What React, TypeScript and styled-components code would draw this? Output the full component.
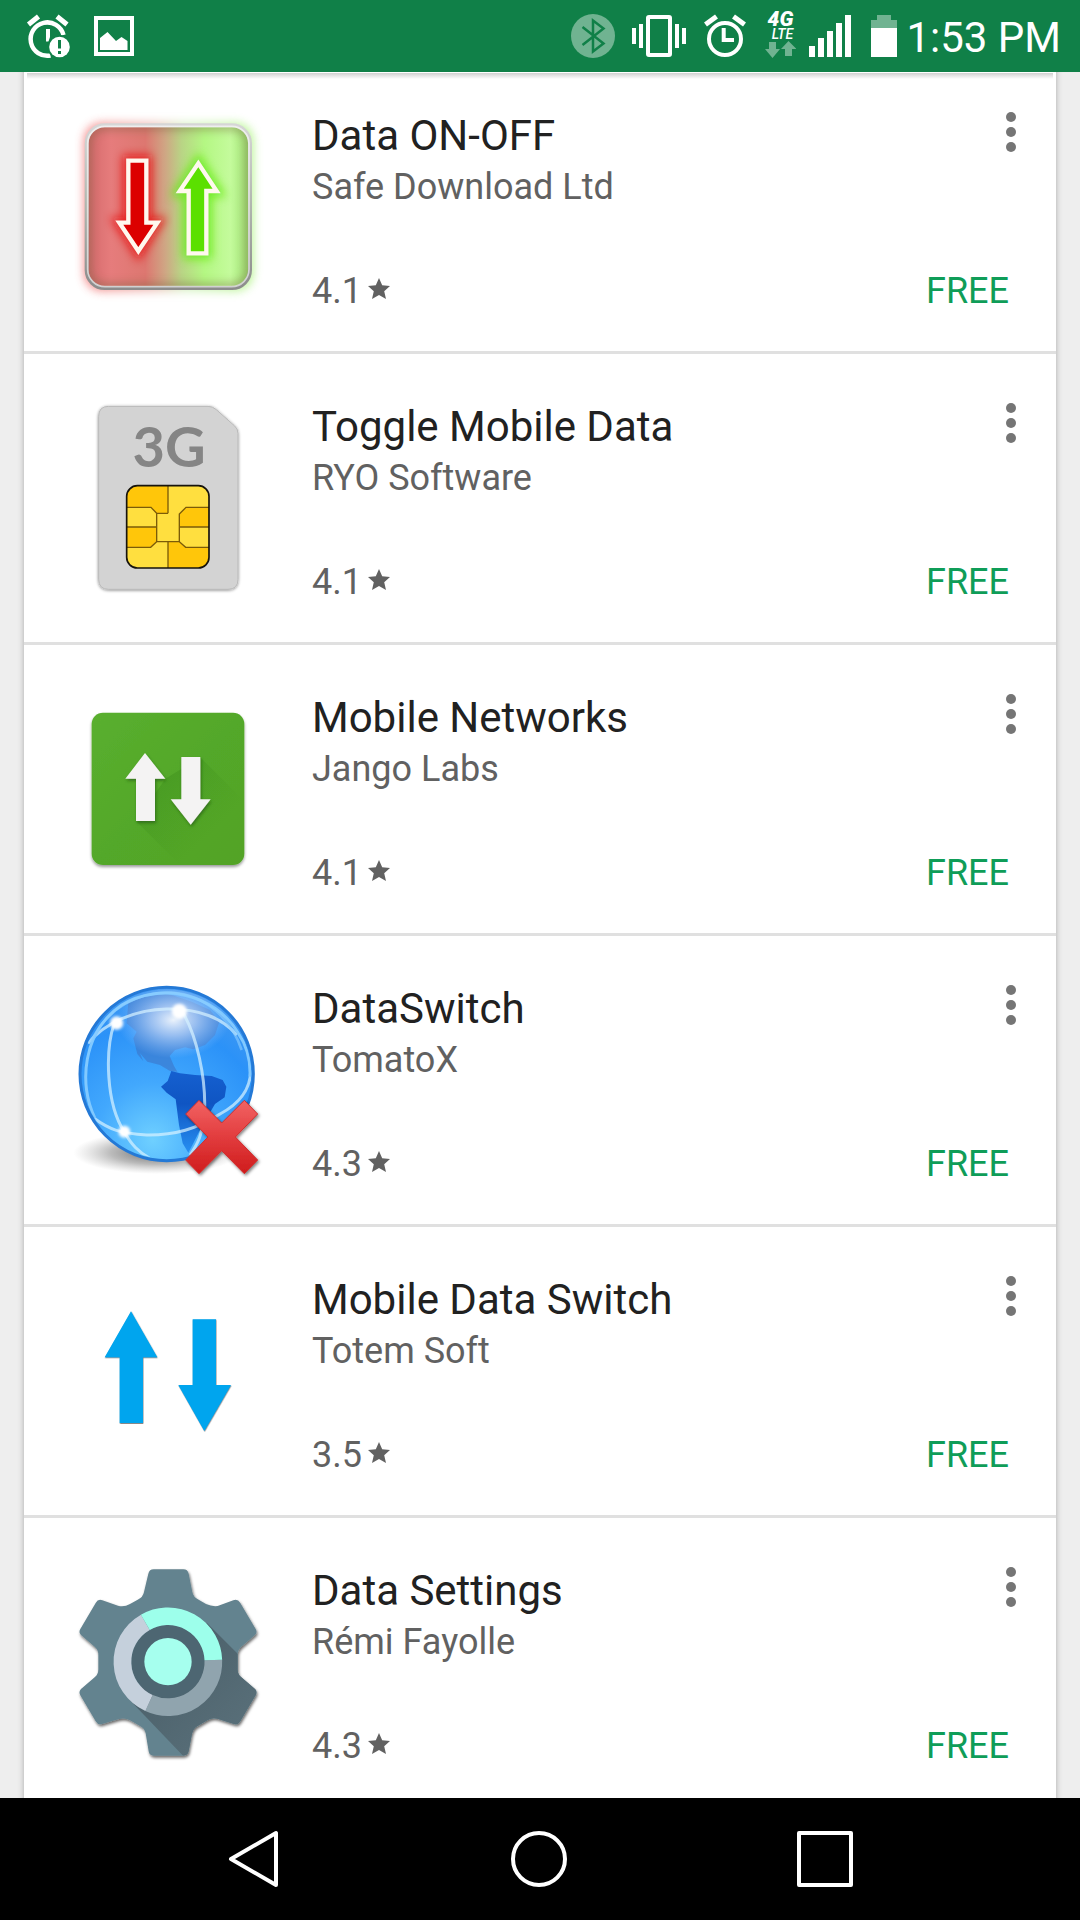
import React from 'react';
import styled, { createGlobalStyle } from 'styled-components';

const GlobalStyle = createGlobalStyle`
  *, *::before, *::after { box-sizing: border-box; }
  body {
    margin: 0;
    background: #eeeeee;
    font-family: Roboto, "Noto Sans", sans-serif;
  }
  h2, p, ul { margin: 0; padding: 0; }
  svg { display: block; flex: none; }
`;

const Screen = styled.div`
  display: flex;
  flex-direction: column;
  height: 100vh;
  overflow: hidden;
`;

const StatusBar = styled.header`
  display: flex;
  flex: none;
  align-items: center;
  justify-content: space-between;
  height: 72px;
  padding: 0 19px 0 24px;
  background: #108048;
  color: #ffffff;
`;

const StatusGroup = styled.div<{ $gap: number }>`
  display: flex;
  align-items: center;
  gap: ${({ $gap }) => $gap}px;
`;

const Clock = styled.time`
  padding-top: 3px;
  font-size: 42px;
  line-height: 50px;
  white-space: nowrap;
`;

const Network = styled.div`
  display: flex;
  flex-direction: column;
  align-items: center;
  width: 40px;
  padding-bottom: 3px;
  font-style: italic;
`;

const NetworkLabel = styled.span`
  font-size: 21px;
  font-weight: 900;
  line-height: 17px;
  text-align: center;
`;

const NetworkBand = styled.small`
  display: block;
  padding-left: 4px;
  font-size: 14px;
  font-weight: 500;
  line-height: 13px;
`;

const Content = styled.main`
  flex: 1;
  min-height: 0;
  padding: 0 24px;
  overflow: hidden;
`;

const AppList = styled.ul`
  margin-top: -9px;
  background: #ffffff;
  box-shadow: 0 0 6px rgba(0, 0, 0, 0.3);
  list-style: none;
`;

const TopShade = styled.div`
  position: relative;
  z-index: 1;
  flex: none;
  height: 7px;
  margin: 0 27px -7px;
  background: linear-gradient(#ffffff 1px, #d0d0d0 1px, #ffffff);
`;

const AppRow = styled.li`
  display: flex;
  align-items: center;
  height: 291px;
  padding: 0 40px 0 36px;
  border-bottom: 3px solid #e0e0e0;
`;

const Details = styled.div`
  display: flex;
  flex: 1;
  flex-direction: column;
  align-self: stretch;
  min-width: 0;
  padding: 48px 0 39px 32px;
`;

const TitleLine = styled.div`
  display: flex;
  align-items: flex-start;
  justify-content: space-between;
`;

const Title = styled.h2`
  color: #212121;
  font-size: 42px;
  font-weight: 400;
  line-height: 50px;
`;

const Developer = styled.p`
  padding-top: 5px;
  color: #616161;
  font-size: 36px;
  line-height: 42px;
`;

const Footer = styled.div`
  display: flex;
  align-items: center;
  justify-content: space-between;
  margin-top: auto;
  padding-right: 7px;
  font-size: 36px;
  line-height: 42px;
`;

const Rating = styled.span`
  display: flex;
  align-items: center;
  gap: 6px;
  color: #616161;
`;

const Price = styled.span`
  color: #0f9d58;
`;

const IconButton = styled.button`
  display: flex;
  justify-content: center;
  padding: 0;
  border: 0;
  background: none;
  cursor: pointer;
`;

const NavBar = styled.nav`
  display: flex;
  flex: none;
  align-items: center;
  height: 122px;
  padding: 0 112px;
  background: #000000;
`;

const NavButton = styled(IconButton)`
  flex: 1;
`;

const MissedAlarmIcon = () => (
  <svg width="49" height="72" viewBox="24 0 49 72" fill="none">
    <path d="M28.500 24.500 38.500 16.500M57 16.500 67 24.500" stroke="#fff" strokeWidth="5" />
    <path d="M63.500 35A16.700 16.700 0 1 0 50.500 55.500" stroke="#fff" strokeWidth="4.500" />
    <path d="M46 29h4v8l-1.500 4.500H46z" fill="#fff" />
    <circle cx="59.500" cy="47" r="12" fill="#108048" />
    <circle cx="59.500" cy="47" r="10.300" fill="#fff" />
    <path d="M59.500 40v8.500M59.500 51v3" stroke="#108048" strokeWidth="3" />
  </svg>
);

const PictureIcon = () => (
  <svg width="40" height="72" viewBox="94 0 40 72" fill="none">
    <path d="M96 18h36v36h-36z" stroke="#fff" strokeWidth="4" />
    <path d="M100 38 107.500 32 116 41l5.500-4 6 4v9H100z" fill="#fff" />
  </svg>
);

const BluetoothIcon = () => (
  <svg width="53" height="72" viewBox="567 0 53 72" fill="none">
    <circle cx="593" cy="36" r="22" fill="#70b391" />
    <path d="M582.500 27 603.500 43.500 593 51.500V20.500L603.500 28.500 582.500 45" stroke="#108048" strokeWidth="2.500" />
  </svg>
);

const VibrateIcon = () => (
  <svg width="63" height="72" viewBox="628 0 63 72" fill="none">
    <rect x="648" y="17" width="22" height="38" rx="1" stroke="#fff" strokeWidth="4" />
    <path d="M634 28v16M641 24v24M677 24v24M684 28v16" stroke="#fff" strokeWidth="4" />
  </svg>
);

const AlarmIcon = () => (
  <svg width="53" height="72" viewBox="699 0 53 72" fill="none">
    <path d="M705.500 24.500 716.500 16.500M733.500 16.500 744.500 24.500" stroke="#fff" strokeWidth="5" />
    <circle cx="725" cy="39" r="16" stroke="#fff" strokeWidth="4" />
    <path d="M723.700 28v12H734" stroke="#fff" strokeWidth="4" />
  </svg>
);

const TrafficIcon = () => (
  <svg width="32" height="17" viewBox="765 41 32 17" fill="#70b391">
    <path d="M770 42h7v7h4L773.500 58 766 49h4z" />
    <path d="M786 56h7v-7h4.500L789.500 41 782 49h4z" />
  </svg>
);

const SignalIcon = () => (
  <svg width="46" height="72" viewBox="807 0 46 72" fill="#fff">
    <path d="M808 46h6v11h-6zM817 38h6v19h-6zM826 31h6v26h-6zM835 23h6v34h-6zM844 15h6v42h-6z" />
  </svg>
);

const BatteryIcon = () => (
  <svg width="36" height="72" viewBox="861 0 36 72">
    <path d="M876 15h14v5h6v9h-26v-9h6z" fill="#70b391" />
    <path d="M870 28h26v29h-26z" fill="#fff" />
  </svg>
);

const MoreIcon = () => (
  <svg width="10" height="42" viewBox="0 0 10 42" fill="#757575">
    <circle cx="5" cy="6" r="5" />
    <circle cx="5" cy="21" r="5" />
    <circle cx="5" cy="36" r="5" />
  </svg>
);

const StarIcon = () => (
  <svg width="22" height="26" viewBox="0 0 22 26" fill="#616161">
    <path d="M11 0 14.200 7.200 22 8 16.200 13.200 18 21 11 17 4 21 5.800 13.200 0 8 7.800 7.200z" />
  </svg>
);

/* App artwork uses a 660-unit square: three units per CSS pixel. */
const Artwork = ({ top, children }: { top: number; children: React.ReactNode }) => (
  <svg width="220" height="220" viewBox={`0 ${top} 660 660`} aria-hidden="true">
    {children}
  </svg>
);

const DataOnOffArt = () => (
  <Artwork top={-9}>
    <defs>
      <linearGradient id="oo-glow">
        <stop offset="0" stopColor="#f04040" />
        <stop offset="0.4" stopColor="#e08a80" />
        <stop offset="0.6" stopColor="#b8e89a" />
        <stop offset="1" stopColor="#8cf04c" />
      </linearGradient>
      <linearGradient id="oo-face">
        <stop offset="0" stopColor="#d46a6c" />
        <stop offset="0.15" stopColor="#e67c7c" />
        <stop offset="0.36" stopColor="#dd7770" />
        <stop offset="0.48" stopColor="#cfa684" />
        <stop offset="0.58" stopColor="#b9d485" />
        <stop offset="0.72" stopColor="#b4f783" />
        <stop offset="0.88" stopColor="#c4fb9c" />
        <stop offset="1" stopColor="#9ce070" />
      </linearGradient>
      <linearGradient id="oo-rim" x1="0" y1="0" x2="0" y2="1">
        <stop offset="0" stopColor="#d6d6d6" />
        <stop offset="0.5" stopColor="#b0b6ae" />
        <stop offset="1" stopColor="#8c8c8c" />
      </linearGradient>
      <filter id="oo-blur" x="-30%" y="-30%" width="160%" height="160%">
        <feGaussianBlur stdDeviation="14" />
      </filter>
      <clipPath id="oo-clip">
        <rect x="86" y="82" width="480" height="476" rx="46" />
      </clipPath>
    </defs>
    <rect x="72" y="68" width="508" height="506" rx="55" fill="url(#oo-glow)" filter="url(#oo-blur)" opacity="0.6" />
    <rect x="80" y="76" width="490" height="488" rx="54" fill="url(#oo-face)" />
    <g clipPath="url(#oo-clip)">
      <rect x="82" y="78" width="486" height="484" rx="50" fill="none" stroke="#6f5d38" strokeWidth="22" opacity="0.5" filter="url(#oo-blur)" />
      <path d="M199 176h65v187h36L235 464 170 363h29z" fill="#ee1010" stroke="#e81010" strokeWidth="22" filter="url(#oo-blur)" opacity="0.8" />
      <path d="M380 466h64V279h35L415 179 351 279h29z" fill="#60ea10" stroke="#60ea10" strokeWidth="22" filter="url(#oo-blur)" opacity="0.8" />
    </g>
    <rect x="80" y="76" width="490" height="488" rx="54" fill="none" stroke="url(#oo-rim)" strokeWidth="12" />
    <rect x="83" y="79" width="484" height="481" rx="52" fill="none" stroke="#fff" strokeWidth="5" opacity="0.6" />
    <path d="M205 182h54v186h33L235 453 178 368h27z" fill="#dc0000" stroke="#fff8ee" strokeWidth="13" />
    <path d="M386 460h53V273h31L415 190 359 273h27z" fill="#5be000" stroke="#fff8ee" strokeWidth="13" />
  </Artwork>
);

const SimArt = () => (
  <Artwork top={-6}>
    <defs>
      <filter id="sim-shadow" x="-10%" y="-10%" width="120%" height="120%">
        <feDropShadow dx="0" dy="2" stdDeviation="4" floodOpacity="0.45" />
      </filter>
      <clipPath id="sim-chip">
        <rect x="200" y="287" width="247" height="247" rx="32" />
      </clipPath>
    </defs>
    <path
      d="M146 49H444Q458 49 469 59L523 107Q534 116 534 130V568Q534 598 504 598H146Q116 598 116 568V79Q116 49 146 49z"
      fill="#d3d3d3"
      stroke="#b9b9b9"
      strokeWidth="3"
      filter="url(#sim-shadow)"
    />
    <text x="327" y="230" textAnchor="middle" fill="#858585" fontFamily="Lato, 'Open Sans', sans-serif" fontSize="168" fontWeight="700">
      3G
    </text>
    <g clipPath="url(#sim-chip)">
      <path d="M200 287h247v247H200z" fill="#ffdf3f" />
      <path d="M200 287H324V370H290L273 352H200zM447 352H378L358 372V411H447zM200 411H289V456L272 472H200zM324 534V455H358L377 472H447V534z" fill="#ffc60a" />
    </g>
    <path
      d="M324 287V370M200 352H273L290 370V455L272 472H200M200 411H289M290 370H324M447 352H378L358 372V455L377 472H447M358 411H447M290 455H358M324 455V534"
      fill="none"
      stroke="#7b5b08"
      strokeWidth="4"
    />
    <rect x="200" y="287" width="247" height="247" rx="32" fill="none" stroke="#16130c" strokeWidth="5" />
  </Artwork>
);

const NetworksArt = () => (
  <Artwork top={-3}>
    <defs>
      <linearGradient id="net-face" x1="0" y1="0" x2="1" y2="1">
        <stop offset="0" stopColor="#5aaf2f" />
        <stop offset="0.5" stopColor="#53a829" />
        <stop offset="1" stopColor="#52a327" />
      </linearGradient>
      <linearGradient id="net-shade" x1="0" y1="0" x2="1" y2="1">
        <stop offset="0" stopColor="#2f7d10" stopOpacity="0.45" />
        <stop offset="0.7" stopColor="#3c8a1a" stopOpacity="0" />
      </linearGradient>
      <filter id="net-shadow" x="-10%" y="-10%" width="120%" height="120%">
        <feDropShadow dx="0" dy="6" stdDeviation="5" floodOpacity="0.4" />
      </filter>
      <filter id="net-small" x="-20%" y="-20%" width="140%" height="140%">
        <feDropShadow dx="3" dy="6" stdDeviation="5" floodColor="#1f5208" floodOpacity="0.6" />
      </filter>
    </defs>
    <rect x="95" y="98" width="458" height="457" rx="34" fill="url(#net-face)" filter="url(#net-shadow)" />
    <path d="M316 296 421 232 553 364V521Q553 555 519 555H360L228 423z" fill="url(#net-shade)" />
    <g fill="#f4f3f3" filter="url(#net-small)">
      <path d="M255 219 316 296H285V423H228V296H196z" />
      <path d="M364 231H421V358H452L392 434 332 358H364z" />
    </g>
  </Artwork>
);

const GlobeArt = () => (
  <Artwork top={0}>
    <defs>
      <radialGradient id="gl-sea" cx="0.42" cy="0.88" r="0.95">
        <stop offset="0" stopColor="#6fd0ff" />
        <stop offset="0.35" stopColor="#42a8fd" />
        <stop offset="0.7" stopColor="#2b92f8" />
        <stop offset="1" stopColor="#4c9bee" />
      </radialGradient>
      <radialGradient id="gl-light" cx="0.5" cy="0.5" r="0.5">
        <stop offset="0" stopColor="#fff" stopOpacity="0.9" />
        <stop offset="0.4" stopColor="#dbe8ff" stopOpacity="0.6" />
        <stop offset="1" stopColor="#b0d2ff" stopOpacity="0" />
      </radialGradient>
      <linearGradient id="gl-south" x1="0" y1="0" x2="0" y2="1">
        <stop offset="0" stopColor="#1560d0" />
        <stop offset="0.4" stopColor="#0f55c3" />
        <stop offset="1" stopColor="#2790f2" />
      </linearGradient>
      <linearGradient id="gl-cross" x1="0" y1="0" x2="0" y2="1">
        <stop offset="0" stopColor="#f26464" />
        <stop offset="0.5" stopColor="#e23c3e" />
        <stop offset="1" stopColor="#cf1c1c" />
      </linearGradient>
      <radialGradient id="gl-floor">
        <stop offset="0" stopColor="#333" stopOpacity="0.75" />
        <stop offset="0.55" stopColor="#555" stopOpacity="0.4" />
        <stop offset="1" stopColor="#888" stopOpacity="0" />
      </radialGradient>
      <filter id="gl-soft" x="-30%" y="-30%" width="160%" height="160%">
        <feGaussianBlur stdDeviation="5" />
      </filter>
      <filter id="gl-shadow" x="-20%" y="-20%" width="140%" height="140%">
        <feDropShadow dx="4" dy="5" stdDeviation="5" floodOpacity="0.5" />
      </filter>
      <clipPath id="gl-clip">
        <circle cx="320" cy="312" r="254" />
      </clipPath>
    </defs>
    <ellipse cx="290" cy="548" rx="250" ry="64" fill="url(#gl-floor)" />
    <circle cx="320" cy="312" r="260" fill="url(#gl-sea)" stroke="#2479d6" strokeWidth="9" />
    <g clipPath="url(#gl-clip)">
      <path
        d="M205 95 245 75 320 70 395 95 450 120 478 155 465 195 435 225 400 238 375 232 345 240 329 258 342 288 352 305 330 303 300 285 262 275 240 250 250 274 232 252 220 205 230 185 200 160z"
        fill="#3d74c6"
        opacity="0.58"
      />
      <path d="M334 303 360 310 405 315 455 318 488 330 499 350 494 382 465 402 440 445 420 480 400 520 385 548 368 520 357 465 347 388 320 368 303 350 323 333z" fill="url(#gl-south)" />
      <ellipse cx="340" cy="150" rx="170" ry="115" fill="url(#gl-light)" />
      <g fill="none" stroke="#d6f1ff" strokeWidth="9" opacity="0.72">
        <path d="M84 220C135 158 225 119 320 117 415 115 490 145 530 195" />
        <path d="M163 160C135 240 137 400 193 486 215 525 235 545 268 564" />
        <path d="M370 130C410 200 437 320 434 420 427 495 415 520 390 555" />
        <path d="M102 445C150 480 180 490 260 495 345 496 410 477 480 432 550 395 572 345 572 300" />
      </g>
      <path d="M105 445C55 345 67 185 185 105 300 35 465 70 535 190 563 230 572 275 570 320" fill="none" stroke="#81c9ff" strokeWidth="9" />
      <path d="M92 216C145 110 235 65 335 68 440 75 515 150 545 240" fill="none" stroke="#8dcfff" strokeWidth="8" opacity="0.6" />
    </g>
    <g fill="#fff">
      <circle cx="170" cy="159" r="20" filter="url(#gl-soft)" />
      <circle cx="358" cy="124" r="23" filter="url(#gl-soft)" />
      <circle cx="193" cy="485" r="18" filter="url(#gl-soft)" />
      <circle cx="172" cy="158" r="9" />
      <circle cx="359" cy="123" r="9" />
      <circle cx="192" cy="486" r="8" />
    </g>
    <path
      d="M417 391 485 459 553 391 593 432 526 501 593 570 553 611 485 542 417 611 377 570 444 501 377 432z"
      fill="url(#gl-cross)"
      stroke="#cf2d2d"
      strokeWidth="3"
      strokeLinejoin="round"
      filter="url(#gl-shadow)"
    />
  </Artwork>
);

const BlueArrowsArt = () => (
  <Artwork top={-57}>
    <defs>
      <filter id="ba-shadow" x="-10%" y="-10%" width="120%" height="120%">
        <feDropShadow dx="1" dy="2" stdDeviation="2" floodOpacity="0.7" />
      </filter>
    </defs>
    <g fill="#03a5ee" filter="url(#ba-shadow)">
      <path d="M213 94 292 232H249V429H179V232H134z" />
      <path d="M398 118H468V315H513L433 453 355 315H398z" />
    </g>
  </Artwork>
);

const GearArt = () => (
  <Artwork top={6}>
    <defs>
      <path
        id="gear-body"
        d="M281 58H370Q383 58 386 71L397 126Q400 142 416 149L438 162Q455 170 473 168L520 151Q533 146 541 159L587 237Q593 247 585 255L544 290Q533 299 533 315V358Q533 373 544 382L585 417Q593 425 587 436L541 514Q534 526 522 522L472 506Q455 501 440 512L412 529Q400 536 396 552L386 604Q383 617 370 617H281Q268 617 266 604L257 550Q253 534 240 528L210 511Q195 502 177 507L126 522Q114 526 107 514L61 436Q55 425 63 417L104 382Q115 373 115 358V315Q115 299 104 290L63 255Q55 247 61 237L107 159Q114 146 127 151L174 167Q192 172 210 162L233 149Q249 142 252 126L265 71Q268 58 281 58z"
      />
      <clipPath id="gear-clip">
        <use href="#gear-body" />
      </clipPath>
      <linearGradient id="gear-shade" x1="0" y1="0" x2="1" y2="1">
        <stop offset="0.2" stopColor="#4b606a" />
        <stop offset="1" stopColor="#5f7680" />
      </linearGradient>
      <filter id="gear-shadow" x="-10%" y="-10%" width="120%" height="120%">
        <feDropShadow dx="3" dy="6" stdDeviation="5" floodOpacity="0.6" />
      </filter>
    </defs>
    <use href="#gear-body" fill="#64838f" filter="url(#gear-shadow)" />
    <path d="M440 218 660 438V660H410L209 450z" fill="url(#gear-shade)" clipPath="url(#gear-clip)" />
    <circle cx="324" cy="335" r="110" fill="#4d6672" />
    <g fill="none" strokeWidth="53">
      <path d="M460 330A136 136 0 0 1 267 459" stroke="#90a4ae" />
      <path d="M267 459A136 136 0 0 1 256 217" stroke="#c5d0dc" />
      <path d="M256 217A136 136 0 0 1 460 330" stroke="#9dffeb" />
    </g>
    <circle cx="324" cy="335" r="71" fill="#a6ffee" />
  </Artwork>
);

const apps = [
  { name: 'Data ON-OFF', developer: 'Safe Download Ltd', rating: '4.1', Art: DataOnOffArt },
  { name: 'Toggle Mobile Data', developer: 'RYO Software', rating: '4.1', Art: SimArt },
  { name: 'Mobile Networks', developer: 'Jango Labs', rating: '4.1', Art: NetworksArt },
  { name: 'DataSwitch', developer: 'TomatoX', rating: '4.3', Art: GlobeArt },
  { name: 'Mobile Data Switch', developer: 'Totem Soft', rating: '3.5', Art: BlueArrowsArt },
  { name: 'Data Settings', developer: 'Rémi Fayolle', rating: '4.3', Art: GearArt },
];

export default function App() {
  return (
    <Screen>
      <GlobalStyle />
      <StatusBar>
        <StatusGroup $gap={21}>
          <MissedAlarmIcon />
          <PictureIcon />
        </StatusGroup>
        <StatusGroup $gap={8}>
          <BluetoothIcon />
          <VibrateIcon />
          <AlarmIcon />
          <Network>
            <NetworkLabel>
              4G
              <NetworkBand>LTE</NetworkBand>
            </NetworkLabel>
            <TrafficIcon />
          </Network>
          <SignalIcon />
          <BatteryIcon />
          <Clock>1:53 PM</Clock>
        </StatusGroup>
      </StatusBar>
      <TopShade />
      <Content>
        <AppList>
          {apps.map(({ name, developer, rating, Art }) => (
            <AppRow key={name}>
              <Art />
              <Details>
                <TitleLine>
                  <Title>{name}</Title>
                  <IconButton type="button" aria-label={`More options for ${name}`}>
                    <MoreIcon />
                  </IconButton>
                </TitleLine>
                <Developer>{developer}</Developer>
                <Footer>
                  <Rating>
                    {rating}
                    <StarIcon />
                  </Rating>
                  <Price>FREE</Price>
                </Footer>
              </Details>
            </AppRow>
          ))}
        </AppList>
      </Content>
      <NavBar>
        <NavButton type="button" aria-label="Back">
          <svg width="56" height="60" viewBox="1 0 56 60" fill="none" stroke="#fff" strokeWidth="4" strokeLinejoin="round">
            <path d="M50 4V56L5 30z" />
          </svg>
        </NavButton>
        <NavButton type="button" aria-label="Home">
          <svg width="60" height="60" viewBox="0 0 60 60" fill="none" stroke="#fff" strokeWidth="4">
            <circle cx="29" cy="30" r="26" />
          </svg>
        </NavButton>
        <NavButton type="button" aria-label="Recent apps">
          <svg width="60" height="60" viewBox="0 0 60 60" fill="none" stroke="#fff" strokeWidth="4" strokeLinejoin="round">
            <path d="M4 4H56V56H4z" />
          </svg>
        </NavButton>
      </NavBar>
    </Screen>
  );
}
